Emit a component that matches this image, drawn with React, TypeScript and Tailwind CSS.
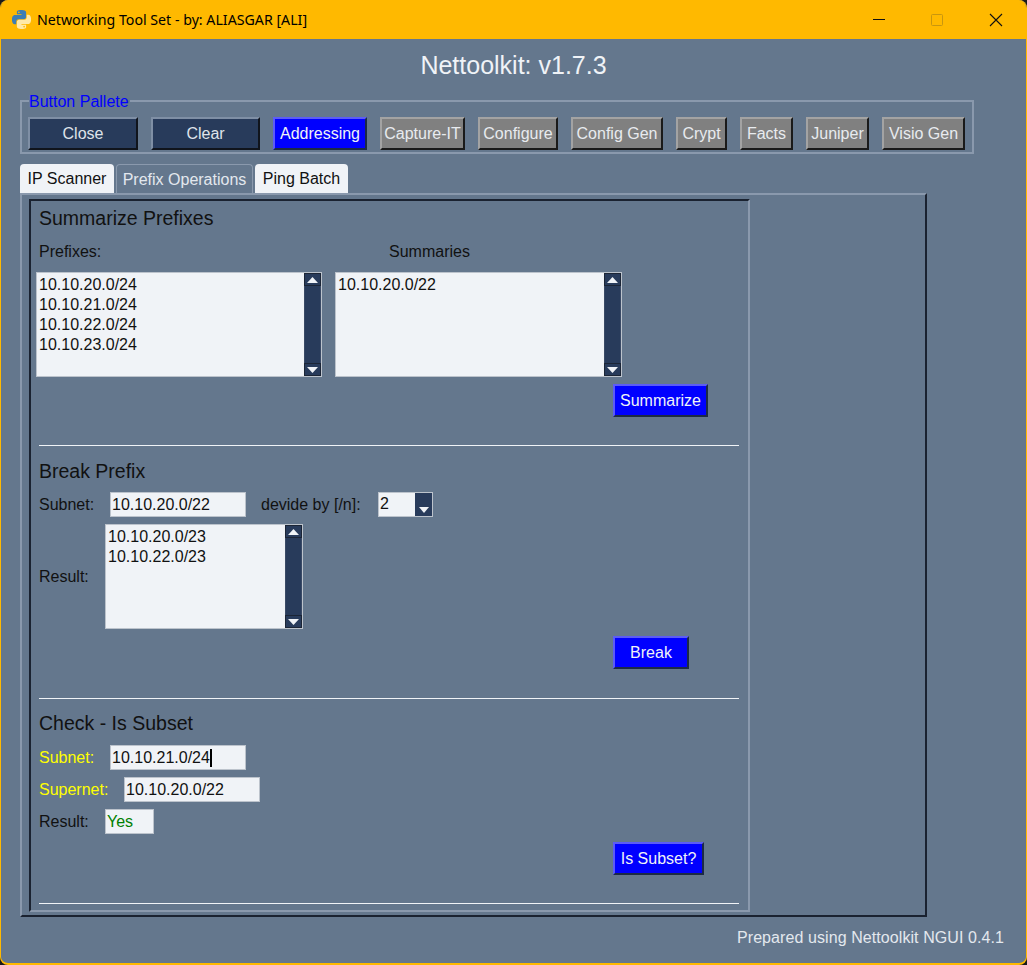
import { ReactNode } from "react";

type TBtn = {
  label: string;
  width: string;
  tone: "navy" | "blue" | "gray";
};

const toneClass = {
  navy: "bg-[#283b5b] text-[#dfe3ea] border-t-[#7f8fa5] border-l-[#7f8fa5] border-r-[#10141c] border-b-[#10141c]",
  blue: "bg-[#0000ff] text-[#f0f3f7] border-t-[#5c5cf5] border-l-[#5c5cf5] border-r-[#1c2a45] border-b-[#1c2a45]",
  gray: "bg-[#808080] text-[#e8ebef] border-t-[#a3a3a3] border-l-[#a3a3a3] border-r-[#1a1a1a] border-b-[#1a1a1a]",
};

const Btn = ({ label, width, tone }: TBtn) => (
  <div
    className={`flex h-[33px] shrink-0 items-center justify-center border-2 ${width} ${toneClass[tone]}`}
  >
    {label}
  </div>
);

const Arrow = ({ up }: { up: boolean }) => (
  <div className="flex h-[13px] w-[17px] items-center justify-center border border-[#1b2536] bg-[#283b5b]">
    <svg width="11" height="6" viewBox="0 0 11 6">
      <polygon
        points={up ? "5.5,0 11,6 0,6" : "0,0 11,0 5.5,6"}
        fill="#f0f3f7"
      />
    </svg>
  </div>
);

const Scrollbar = () => (
  <div className="flex w-[17px] shrink-0 flex-col bg-[#283b5b]">
    <Arrow up />
    <div className="flex-1 border-x border-[#3a4a66]" />
    <Arrow up={false} />
  </div>
);

const ListBox = ({ width, lines }: { width: string; lines: string[] }) => (
  <div
    className={`flex h-[105px] shrink-0 border border-[#bcc3cc] bg-[#f0f3f7] ${width}`}
  >
    <div className="flex-1 pt-[2px] pl-[2px] leading-[20px] text-[#111]">
      {lines.map((l) => (
        <div key={l}>{l}</div>
      ))}
    </div>
    <Scrollbar />
  </div>
);

const Field = ({ width, children }: { width: string; children: ReactNode }) => (
  <div
    className={`flex h-[25px] shrink-0 items-center border border-[#bcc3cc] bg-[#f0f3f7] pl-[1px] text-[#111] ${width}`}
  >
    {children}
  </div>
);

const Heading = ({ children }: { children: ReactNode }) => (
  <div className="h-[24px] text-[19.5px] leading-[24px] text-[#111]">
    {children}
  </div>
);

const Rule = ({ top }: { top: string }) => (
  <div className={`h-px w-[700px] bg-[#f0f3f7] ${top}`} />
);

const PythonLogo = () => (
  <svg width="19" height="19" viewBox="0 0 24 24" className="shrink-0">
    <path
      fill="#3d7eb4"
      d="M14.25.18l.9.2.73.26.59.3.45.32.34.34.25.34.16.33.1.3.04.26.02.2-.01.13V8.5l-.05.63-.13.55-.21.46-.26.38-.3.31-.33.25-.35.19-.35.14-.33.1-.3.07-.26.04-.21.02H8.77l-.69.05-.59.14-.5.22-.41.27-.33.32-.27.35-.2.36-.15.37-.1.35-.07.32-.04.27-.02.21v3.06H3.17l-.21-.03-.28-.07-.32-.12-.35-.18-.36-.26-.36-.36-.35-.46-.32-.59-.28-.73-.21-.88-.14-1.05-.05-1.23.06-1.22.16-1.04.24-.87.32-.71.36-.57.4-.44.42-.33.42-.24.4-.16.36-.1.32-.05.24-.01h.16l.06.01h8.16v-.83H6.18l-.01-2.75-.02-.37.05-.34.11-.31.17-.28.25-.26.31-.23.38-.2.44-.18.51-.15.58-.12.64-.1.71-.06.77-.04.84-.02 1.27.05zm-6.3 1.98l-.23.33-.08.41.08.41.23.34.33.22.41.09.41-.09.33-.22.23-.34.08-.41-.08-.41-.23-.33-.33-.22-.41-.09-.41.09z"
    />
    <path
      fill="#ffe9a8"
      d="M21.04 6.11l.28.06.32.12.35.18.36.27.36.35.35.47.32.59.28.73.21.88.14 1.04.05 1.23-.06 1.23-.16 1.04-.24.86-.32.71-.36.57-.4.45-.42.33-.42.24-.4.16-.36.09-.32.05-.24.02-.16-.01h-8.22v.82h5.84l.01 2.76.02.36-.05.34-.11.31-.17.29-.25.25-.31.24-.38.2-.44.17-.51.15-.58.13-.64.09-.71.07-.77.04-.84.01-1.27-.04-1.07-.14-.9-.2-.73-.25-.59-.3-.45-.33-.34-.34-.25-.34-.16-.33-.1-.3-.04-.25-.02-.2.01-.13v-5.34l.05-.64.13-.54.21-.46.26-.38.3-.32.33-.24.35-.2.35-.14.33-.1.3-.06.26-.04.21-.02.13-.01h5.84l.69-.05.59-.14.5-.21.41-.28.33-.32.27-.35.2-.36.15-.36.1-.35.07-.32.04-.28.02-.21V6.07h2.09l.14.01zm-6.47 14.25l-.23.33-.08.41.08.41.23.33.33.23.41.08.41-.08.33-.23.23-.33.08-.41-.08-.41-.23-.33-.33-.23-.41-.08-.41.08z"
    />
  </svg>
);

const TitleBar = () => (
  <div className="flex h-[39px] shrink-0 items-center bg-[#ffb900] pl-[11px] font-['Noto_Sans',sans-serif] text-[14.2px] text-black">
    <PythonLogo />
    <span className="ml-[6px]">Networking Tool Set - by: ALIASGAR [ALI]</span>
    <div className="ml-auto flex items-center">
      <svg width="14" height="14" viewBox="0 0 14 14" className="mr-[45px]">
        <line x1="2" y1="6.5" x2="14" y2="6.5" stroke="#111" />
      </svg>
      <svg width="14" height="14" viewBox="0 0 14 14" className="mr-[45px]">
        <rect
          x="1.5"
          y="1.5"
          width="11"
          height="11"
          rx="1"
          fill="none"
          stroke="#c8960f"
        />
      </svg>
      <svg width="14" height="14" viewBox="0 0 14 14" className="mr-[23px]">
        <path d="M1 1 L13 13 M13 1 L1 13" stroke="#111" strokeWidth="1.1" />
      </svg>
    </div>
  </div>
);

const ButtonPalette = () => (
  <div className="relative ml-[19px] h-[54px] w-[954px] border-2 border-[#8a99ad] pt-[15px] pl-[6px]">
    <span className="absolute -top-[8px] left-[7px] bg-[#64778d] pr-[1px] leading-[16px] text-[#0000ff]">
      Button Pallete
    </span>
    <div className="flex gap-[13px]">
      <Btn label="Close" width="w-[110px]" tone="navy" />
      <Btn label="Clear" width="w-[109px]" tone="navy" />
      <Btn label="Addressing" width="w-[94px]" tone="blue" />
      <Btn label="Capture-IT" width="w-[85px]" tone="gray" />
      <Btn label="Configure" width="w-[80px]" tone="gray" />
      <Btn label="Config Gen" width="w-[92px]" tone="gray" />
      <Btn label="Crypt" width="w-[51px]" tone="gray" />
      <Btn label="Facts" width="w-[53px]" tone="gray" />
      <Btn label="Juniper" width="w-[63px]" tone="gray" />
      <Btn label="Visio Gen" width="w-[83px]" tone="gray" />
    </div>
  </div>
);

const Tabs = () => (
  <div className="mt-[10px] ml-[19px] flex h-[29px] items-end gap-[2px]">
    <div className="flex h-[29px] w-[94px] items-center justify-center rounded-t-[4px] bg-[#f0f3f7] pt-px text-[#111]">
      IP Scanner
    </div>
    <div className="flex h-[29px] w-[137px] items-center justify-center rounded-t-[4px] border-x border-t border-[#8a99ad] pt-px text-[#e3e8ee]">
      Prefix Operations
    </div>
    <div className="flex h-[29px] w-[93px] items-center justify-center rounded-t-[4px] bg-[#f0f3f7] pt-px text-[#111]">
      Ping Batch
    </div>
  </div>
);

const SummarizeSection = () => (
  <>
    <div className="mt-[5px]">
      <Heading>Summarize Prefixes</Heading>
    </div>
    <div className="mt-[12px] flex h-[20px] items-center text-[#111]">
      <span className="w-[350px]">Prefixes:</span>
      <span>Summaries</span>
    </div>
    <div className="mt-[10px] -ml-[3px] flex gap-[13px]">
      <ListBox
        width="w-[286px]"
        lines={["10.10.20.0/24", "10.10.21.0/24", "10.10.22.0/24", "10.10.23.0/24"]}
      />
      <ListBox width="w-[287px]" lines={["10.10.20.0/22"]} />
    </div>
    <div className="mt-[7px] ml-[574px]">
      <Btn label="Summarize" width="w-[95px]" tone="blue" />
    </div>
    <Rule top="mt-[28px]" />
  </>
);

const BreakSection = () => (
  <>
    <div className="mt-[13px]">
      <Heading>Break Prefix</Heading>
    </div>
    <div className="mt-[9px] flex items-center text-[#111]">
      <span className="w-[71px]">Subnet:</span>
      <Field width="w-[136px]">10.10.20.0/22</Field>
      <span className="ml-[15px] w-[117px]">devide by [/n]:</span>
      <div className="flex h-[25px] w-[55px] border border-[#bcc3cc] bg-[#f0f3f7] pl-[1px]">
        <span className="flex-1 leading-[22px]">2</span>
        <div className="flex w-[17px] items-end justify-center bg-[#283b5b] pb-[3px]">
          <svg width="10" height="6" viewBox="0 0 10 6">
            <polygon points="0,0 10,0 5,6" fill="#f0f3f7" />
          </svg>
        </div>
      </div>
    </div>
    <div className="mt-[7px] flex items-center text-[#111]">
      <span className="w-[66px]">Result:</span>
      <ListBox width="w-[198px]" lines={["10.10.20.0/23", "10.10.22.0/23"]} />
    </div>
    <div className="mt-[7px] ml-[574px]">
      <Btn label="Break" width="w-[76px]" tone="blue" />
    </div>
    <Rule top="mt-[29px]" />
  </>
);

const SubsetSection = () => (
  <>
    <div className="mt-[12px]">
      <Heading>Check - Is Subset</Heading>
    </div>
    <div className="mt-[10px] flex items-center">
      <span className="w-[71px] text-[#ffff00]">Subnet:</span>
      <Field width="w-[136px]">
        10.10.21.0/24
        <span className="h-[18px] w-[2px] bg-black" />
      </Field>
    </div>
    <div className="mt-[7px] flex items-center">
      <span className="w-[85px] text-[#ffff00]">Supernet:</span>
      <Field width="w-[136px]">10.10.20.0/22</Field>
    </div>
    <div className="mt-[7px] flex items-center text-[#111]">
      <span className="w-[66px]">Result:</span>
      <Field width="w-[49px]">
        <span className="text-[#008000]">Yes</span>
      </Field>
    </div>
    <div className="mt-[8px] ml-[574px]">
      <Btn label="Is Subset?" width="w-[91px]" tone="blue" />
    </div>
    <Rule top="mt-[28px]" />
  </>
);

const App = () => {
  return (
    <div className="h-[965px] w-[1027px] bg-[#1a1a1a]">
      <div className="flex h-full flex-col overflow-hidden rounded-[8px] border-x border-b-2 border-[#ffb900] bg-[#64778d] font-['Liberation_Sans',Arial,sans-serif] text-[16px]">
        <TitleBar />
        <div className="flex h-[54px] shrink-0 items-center justify-center text-[25px] text-[#f0f3f7]">
          Nettoolkit: v1.7.3
        </div>
        <div className="mt-[7px]">
          <ButtonPalette />
        </div>
        <Tabs />
        <div className="ml-[19px] h-[724px] w-[907px] border-2 border-t-[#8a99ad] border-l-[#8a99ad] border-r-[#1a2230] border-b-[#1a2230] pt-[4px] pl-[7px]">
          <div className="h-[713px] w-[721px] border-2 border-t-[#1a2230] border-l-[#1a2230] border-r-[#8a99ad] border-b-[#8a99ad] pl-[8px]">
            <SummarizeSection />
            <BreakSection />
            <SubsetSection />
          </div>
        </div>
        <div className="mt-[9px] mr-[22px] text-right leading-[24px] tracking-[0.08px] text-[#e3e8ee]">
          Prepared using Nettoolkit NGUI 0.4.1
        </div>
      </div>
    </div>
  );
};

export default App;
